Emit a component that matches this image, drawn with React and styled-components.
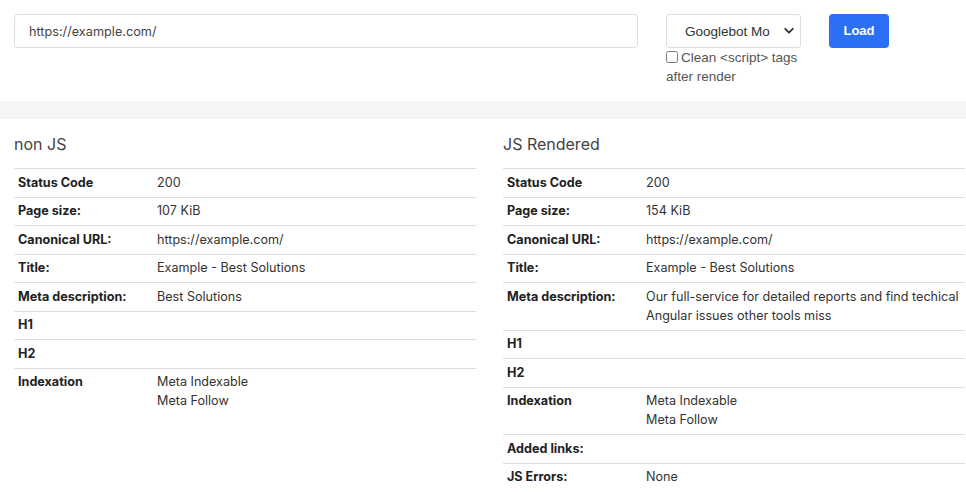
import React from "react";
import styled, { createGlobalStyle } from "styled-components";

const Global = createGlobalStyle`
  html, body { margin: 0; padding: 0; background: #fff; }
  body { font-family: Inter, "Noto Sans", sans-serif; font-size: 12.6px; color: #222; }
  * { box-sizing: border-box; }
`;

const TopBar = styled.div`
  height: 101px;
  padding: 14px;
  display: flex;
  align-items: flex-start;
`;

const UrlInput = styled.input`
  width: 624px;
  height: 34px;
  margin-right: 28px;
  border: 1px solid #dedede;
  border-radius: 4px;
  padding: 0 14px;
  font-family: Inter, sans-serif;
  font-size: 12.7px;
  color: #444;
  outline: none;
`;

const Options = styled.div`
  width: 135px;
  margin-right: 28px;
  display: flex;
  flex-direction: column;
`;

const SelectWrap = styled.div`
  position: relative;
  height: 34px;
`;

const Select = styled.select`
  appearance: none;
  width: 100%;
  height: 34px;
  border: 1px solid #dedede;
  border-radius: 3px;
  background: #fff;
  padding: 0 30px 0 18px;
  font-family: "Liberation Sans", Arial, sans-serif;
  font-size: 13.5px;
  color: #333;
  outline: none;
`;

const Chevron = styled.svg`
  position: absolute;
  right: 7px;
  top: 13px;
  pointer-events: none;
`;

const CheckLabel = styled.label`
  font-family: "Liberation Sans", Arial, sans-serif;
  font-size: 13.5px;
  line-height: 19px;
  color: #555;
  margin-top: 0;
`;

const Check = styled.input`
  margin: 0 3px 0 0;
  width: 12px;
  height: 12px;
  vertical-align: -1px;
`;

const LoadButton = styled.button`
  width: 60px;
  height: 34px;
  border: none;
  border-radius: 4px;
  background: #2a6ff4;
  color: #fff;
  font-family: "Liberation Sans", Arial, sans-serif;
  font-weight: 700;
  font-size: 13px;
  padding: 0 0 1px;
`;

const Band = styled.div`
  height: 18px;
  background: #f5f5f5;
`;

const Columns = styled.div`
  display: grid;
  grid-template-columns: 462px 462px;
  column-gap: 27px;
  padding: 0 14px;
`;

const Heading = styled.h2`
  margin: 13px 0 12px;
  font-size: 16px;
  line-height: 24px;
  font-weight: 400;
  color: #444;
`;

const Table = styled.table`
  width: 100%;
  border-collapse: collapse;
`;

const Row = styled.tr`
  border-top: 1px solid #dedede;
`;

const Label = styled.th`
  width: 139px;
  text-align: left;
  vertical-align: top;
  padding: 3.75px 4px 4.75px;
  font-weight: 700;
  line-height: 19px;
  color: #222;
`;

const Value = styled.td`
  vertical-align: top;
  padding: 3.75px 4px 4.75px;
  line-height: 19px;
  color: #333;
`;

const Line = styled.div``;

const left = [
  ["Status Code", ["200"]],
  ["Page size:", ["107 KiB"]],
  ["Canonical URL:", ["https://example.com/"]],
  ["Title:", ["Example - Best Solutions"]],
  ["Meta description:", ["Best Solutions"]],
  ["H1", []],
  ["H2", []],
  ["Indexation", ["Meta Indexable", "Meta Follow"]],
];

const right = [
  ["Status Code", ["200"]],
  ["Page size:", ["154 KiB"]],
  ["Canonical URL:", ["https://example.com/"]],
  ["Title:", ["Example - Best Solutions"]],
  ["Meta description:", ["Our full-service for detailed reports and find techical Angular issues other tools miss"]],
  ["H1", []],
  ["H2", []],
  ["Indexation", ["Meta Indexable", "Meta Follow"]],
  ["Added links:", []],
  ["JS Errors:", ["None"]],
];

function Panel({ title, rows }) {
  return (
    <div>
      <Heading>{title}</Heading>
      <Table>
        <tbody>
          {rows.map(([k, v]) => (
            <Row key={k}>
              <Label>{k}</Label>
              <Value>
                {v.map((l) => (
                  <Line key={l}>{l}</Line>
                ))}
              </Value>
            </Row>
          ))}
        </tbody>
      </Table>
    </div>
  );
}

export default function App() {
  return (
    <>
      <Global />
      <TopBar>
        <UrlInput defaultValue="https://example.com/" />
        <Options>
          <SelectWrap>
            <Select defaultValue="m">
              <option value="m">Googlebot Mobile</option>
              <option value="d">Googlebot Desktop</option>
            </Select>
            <Chevron width="10" height="8" viewBox="0 0 10 8">
              <path d="M1.2 1.8 L5 5.6 L8.8 1.8" fill="none" stroke="#333" strokeWidth="1.8" strokeLinecap="round" strokeLinejoin="round" />
            </Chevron>
          </SelectWrap>
          <CheckLabel>
            <Check type="checkbox" />
            Clean &lt;script&gt; tags after render
          </CheckLabel>
        </Options>
        <LoadButton>Load</LoadButton>
      </TopBar>
      <Band />
      <Columns>
        <Panel title="non JS" rows={left} />
        <Panel title="JS Rendered" rows={right} />
      </Columns>
    </>
  );
}
